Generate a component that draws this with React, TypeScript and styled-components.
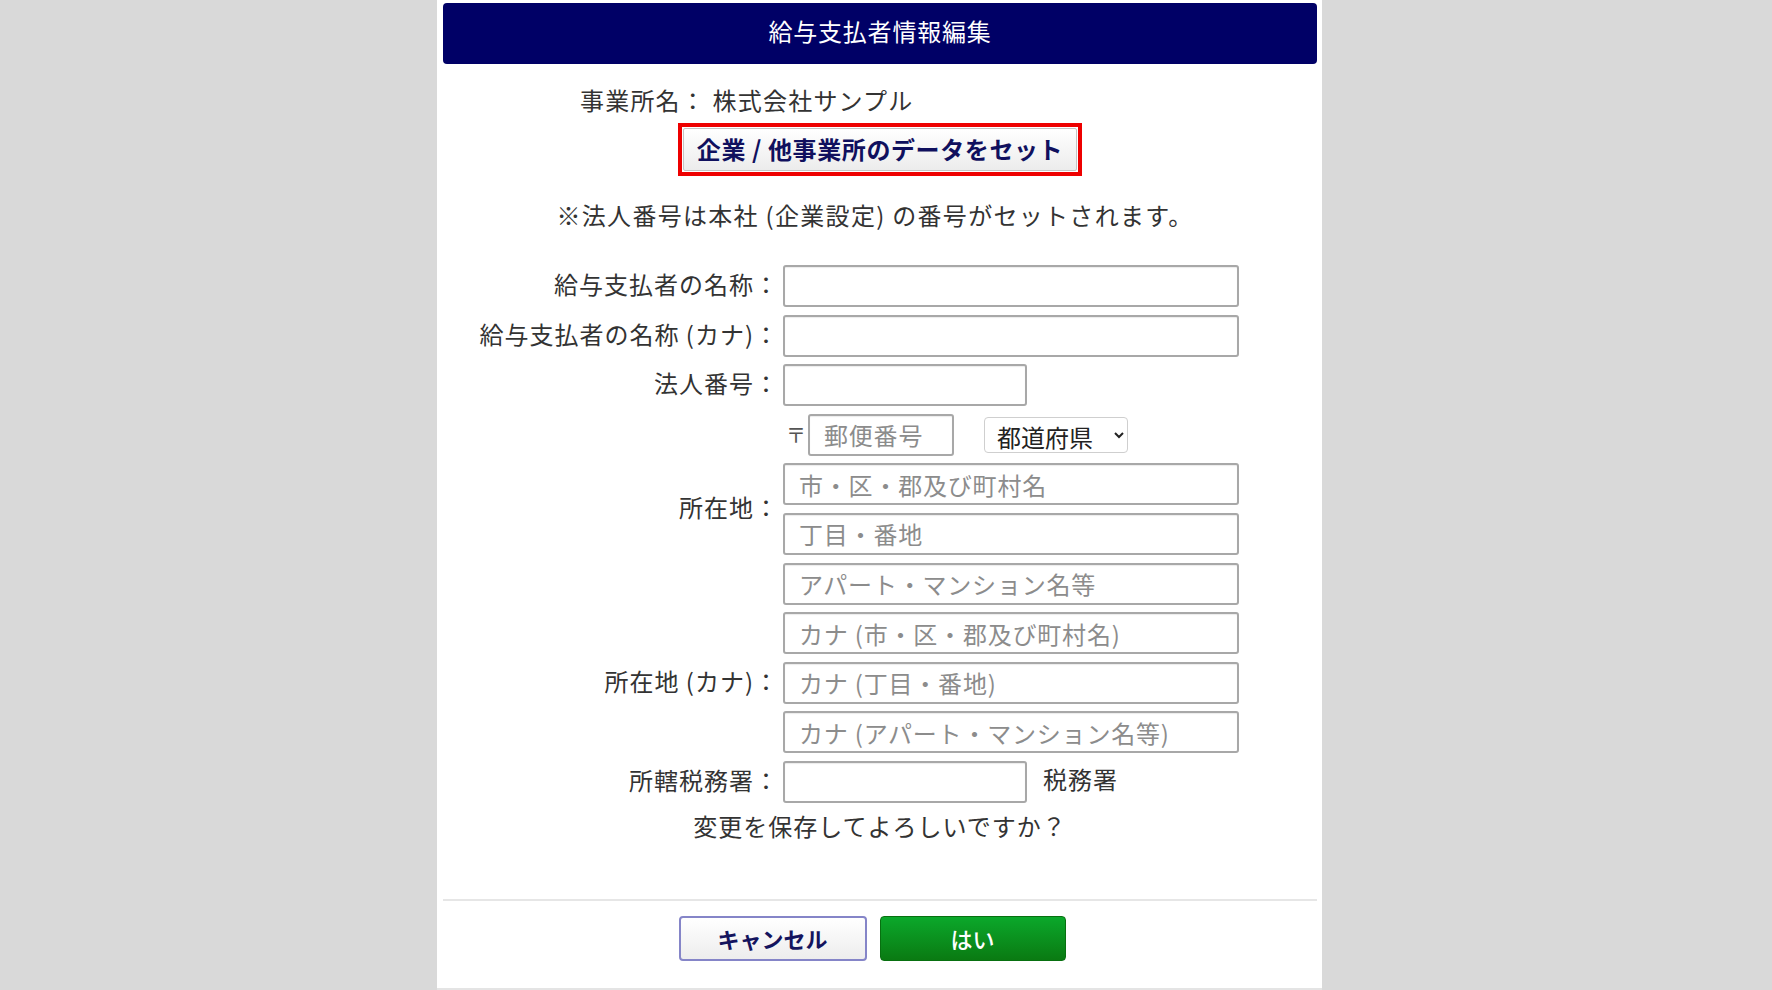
import React from 'react';
import styled, { createGlobalStyle } from 'styled-components';

const GlobalStyle = createGlobalStyle`
    html, body {
        margin: 0;
        padding: 0;
        background: #d9d9d9;
    }
    body {
        font-family: 'Noto Sans CJK JP', 'Noto Sans', sans-serif;
        color: #333;
    }
`;

const Page = styled.div`
    display: flex;
    min-height: 990px;
    padding-left: 437px;
`;

const Panel = styled.div`
    background: #fff;
    border-bottom: 2px solid #e4e4e4;
    box-sizing: border-box;
    display: flex;
    flex-direction: column;
    height: 990px;
    padding: 3px 5px 0 6px;
    width: 885px;
`;

const Header = styled.div`
    align-items: center;
    background: #000066;
    border-radius: 4px;
    box-sizing: border-box;
    color: #fff;
    display: flex;
    flex-shrink: 0;
    font-size: 24px;
    height: 61px;
    justify-content: center;
    letter-spacing: 0.8px;
    padding-bottom: 6px;
`;

const OfficeLine = styled.div`
    font-size: 24px;
    letter-spacing: 1.2px;
    line-height: 30px;
    margin-top: 21px;
    padding-left: 137px;
    white-space: pre;
`;

const SetRow = styled.div`
    display: flex;
    justify-content: center;
    margin-top: 8px;
`;

const Highlight = styled.div`
    border: 4px solid #ee0000;
    box-sizing: border-box;
    display: flex;
    height: 53px;
    padding: 1px;
    width: 404px;
`;

const SetButton = styled.button`
    background: linear-gradient(#ffffff, #ececec);
    border: 1px solid #c4c4c4;
    border-radius: 2px;
    color: #10105e;
    cursor: pointer;
    flex: 1;
    font-family: inherit;
    font-size: 24px;
    font-weight: 700;
    letter-spacing: 0.6px;
    padding: 0 0 2px;
`;

const Note = styled.div`
    font-size: 24px;
    letter-spacing: 1.3px;
    line-height: 30px;
    margin-right: 10px;
    margin-top: 24px;
    text-align: center;
`;

const FormGrid = styled.div`
    column-gap: 4px;
    display: grid;
    grid-auto-rows: 42px;
    grid-template-columns: 311px 456px;
    margin-top: 35px;
    padding-left: 25px;
    row-gap: 7.6px;
`;

const Label = styled.div<{ row: number; span?: number }>`
    align-self: center;
    font-size: 24px;
    grid-column: 1;
    grid-row: ${(p) => `${p.row} / span ${p.span || 1}`};
    letter-spacing: 1px;
    line-height: 30px;
    margin-top: -4px;
    text-align: right;
    white-space: nowrap;
`;

const Field = styled.div<{ row: number }>`
    align-items: center;
    display: flex;
    grid-column: 2;
    grid-row: ${(p) => p.row};
`;

const TextInput = styled.input<{ w?: number }>`
    background: #fff;
    border: 2px solid #a8a8a8;
    border-radius: 3px;
    box-shadow: inset 0 1px 1px rgba(0, 0, 0, 0.08);
    box-sizing: border-box;
    color: #333;
    font-family: inherit;
    font-size: 24px;
    height: 42px;
    letter-spacing: 0.8px;
    outline: none;
    padding: 0 14px;
    width: ${(p) => (p.w ? `${p.w}px` : '100%')};

    &::placeholder {
        color: #8c8c8c;
    }
`;

const PostMark = styled.span`
    color: #555;
    font-size: 20px;
    margin: 0 2px 0 3px;
`;

const PrefSelect = styled.select`
    background: #fff;
    border: 1px solid #cfcfcf;
    border-radius: 4px;
    box-sizing: border-box;
    color: #222;
    font-family: inherit;
    font-size: 24px;
    height: 36px;
    margin-left: 30px;
    padding: 0 4px 0 8px;
    width: 144px;
`;

const Suffix = styled.span`
    font-size: 24px;
    letter-spacing: 1px;
    margin-left: 16px;
    margin-top: -6px;
`;

const Confirm = styled.div`
    font-size: 24px;
    letter-spacing: 1px;
    line-height: 30px;
    margin-top: 8px;
    text-align: center;
`;

const Divider = styled.div`
    background: #e6e6e6;
    flex-shrink: 0;
    height: 2px;
    margin-top: 58px;
`;

const Footer = styled.div`
    display: flex;
    gap: 13px;
    justify-content: center;
    margin-right: 16px;
    margin-top: 15px;
`;

const ActionButton = styled.button<{ primary?: boolean }>`
    background: ${(p) =>
        p.primary ? 'linear-gradient(#0ba82b, #0a7a12)' : 'linear-gradient(#ffffff, #ededed)'};
    border: ${(p) => (p.primary ? '1px solid #087010' : '2px solid #8585c8')};
    border-radius: 4px;
    color: ${(p) => (p.primary ? '#fff' : '#14145e')};
    cursor: pointer;
    font-family: inherit;
    font-size: 22px;
    font-weight: ${(p) => (p.primary ? 500 : 700)};
    height: 45px;
    width: ${(p) => (p.primary ? '186px' : '188px')};
`;

export default function App() {
    return (
        <Page>
            <GlobalStyle />
            <Panel>
                <Header>給与支払者情報編集</Header>
                <OfficeLine>事業所名： 株式会社サンプル</OfficeLine>
                <SetRow>
                    <Highlight>
                        <SetButton>企業 / 他事業所のデータをセット</SetButton>
                    </Highlight>
                </SetRow>
                <Note>※法人番号は本社 (企業設定) の番号がセットされます。</Note>
                <FormGrid>
                    <Label row={1}>給与支払者の名称：</Label>
                    <Field row={1}>
                        <TextInput />
                    </Field>
                    <Label row={2}>給与支払者の名称 (カナ)：</Label>
                    <Field row={2}>
                        <TextInput />
                    </Field>
                    <Label row={3}>法人番号：</Label>
                    <Field row={3}>
                        <TextInput w={244} />
                    </Field>
                    <Label row={4} span={4}>
                        所在地：
                    </Label>
                    <Field row={4}>
                        <PostMark>〒</PostMark>
                        <TextInput w={146} placeholder="郵便番号" />
                        <PrefSelect defaultValue="">
                            <option value="">都道府県</option>
                        </PrefSelect>
                    </Field>
                    <Field row={5}>
                        <TextInput placeholder="市・区・郡及び町村名" />
                    </Field>
                    <Field row={6}>
                        <TextInput placeholder="丁目・番地" />
                    </Field>
                    <Field row={7}>
                        <TextInput placeholder="アパート・マンション名等" />
                    </Field>
                    <Label row={8} span={3}>
                        所在地 (カナ)：
                    </Label>
                    <Field row={8}>
                        <TextInput placeholder="カナ (市・区・郡及び町村名)" />
                    </Field>
                    <Field row={9}>
                        <TextInput placeholder="カナ (丁目・番地)" />
                    </Field>
                    <Field row={10}>
                        <TextInput placeholder="カナ (アパート・マンション名等)" />
                    </Field>
                    <Label row={11}>所轄税務署：</Label>
                    <Field row={11}>
                        <TextInput w={244} />
                        <Suffix>税務署</Suffix>
                    </Field>
                </FormGrid>
                <Confirm>変更を保存してよろしいですか？</Confirm>
                <Divider />
                <Footer>
                    <ActionButton>キャンセル</ActionButton>
                    <ActionButton primary>はい</ActionButton>
                </Footer>
            </Panel>
        </Page>
    );
}
